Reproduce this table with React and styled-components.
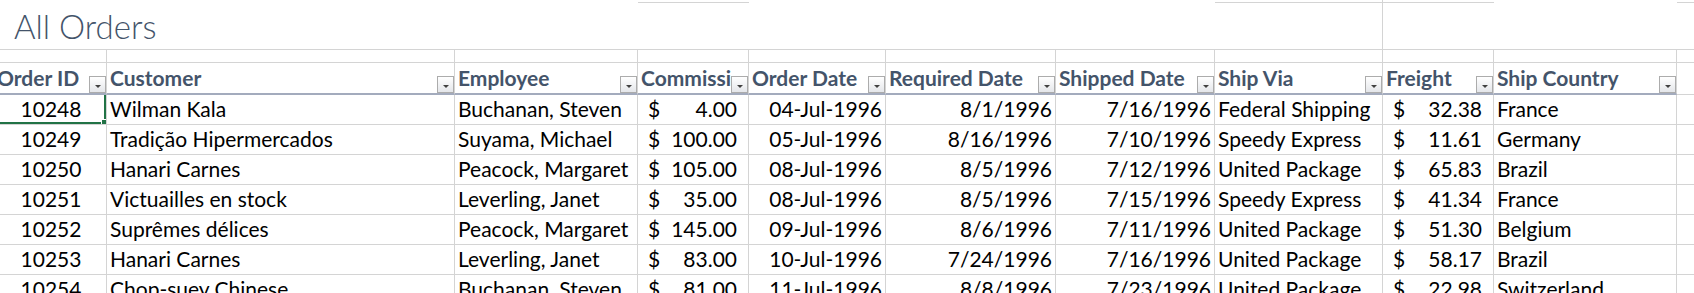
import React from 'react';
import styled, { createGlobalStyle } from 'styled-components';

const GRID = '#d4d4d4';
const HEAD = '#44546a';

const GlobalStyle = createGlobalStyle`
  html, body {
    margin: 0;
    padding: 0;
    background: #fff;
    overflow: hidden;
  }
  body {
    font-family: Lato, "Noto Sans", sans-serif;
    color: #000;
  }
`;

const columns = [
  { key: 'id', title: 'Order ID', width: 112, align: 'center' },
  { key: 'customer', title: 'Customer', width: 348 },
  { key: 'employee', title: 'Employee', width: 183 },
  { key: 'commission', title: 'Commission', width: 111, money: true },
  { key: 'orderDate', title: 'Order Date', width: 137, align: 'right' },
  { key: 'required', title: 'Required Date', width: 170, align: 'right' },
  { key: 'shipped', title: 'Shipped Date', width: 159, align: 'right' },
  { key: 'shipVia', title: 'Ship Via', width: 168 },
  { key: 'freight', title: 'Freight', width: 111, money: true },
  { key: 'country', title: 'Ship Country', width: 183 },
];

const orders = [
  ['10248', 'Wilman Kala', 'Buchanan, Steven', '4.00', '04-Jul-1996', '8/1/1996', '7/16/1996', 'Federal Shipping', '32.38', 'France'],
  ['10249', 'Tradição Hipermercados', 'Suyama, Michael', '100.00', '05-Jul-1996', '8/16/1996', '7/10/1996', 'Speedy Express', '11.61', 'Germany'],
  ['10250', 'Hanari Carnes', 'Peacock, Margaret', '105.00', '08-Jul-1996', '8/5/1996', '7/12/1996', 'United Package', '65.83', 'Brazil'],
  ['10251', 'Victuailles en stock', 'Leverling, Janet', '35.00', '08-Jul-1996', '8/5/1996', '7/15/1996', 'Speedy Express', '41.34', 'France'],
  ['10252', 'Suprêmes délices', 'Peacock, Margaret', '145.00', '09-Jul-1996', '8/6/1996', '7/11/1996', 'United Package', '51.30', 'Belgium'],
  ['10253', 'Hanari Carnes', 'Leverling, Janet', '83.00', '10-Jul-1996', '7/24/1996', '7/16/1996', 'United Package', '58.17', 'Brazil'],
  ['10254', 'Chop-suey Chinese', 'Buchanan, Steven', '81.00', '11-Jul-1996', '8/8/1996', '7/23/1996', 'United Package', '22.98', 'Switzerland'],
];

// cells of the strip above the title that still show their bottom gridline
const topLines = [3, 7, 8];

const Sheet = styled.div`
  display: flex;
  flex-direction: column;
  margin-left: -5px;
  width: 1699px;
`;

const Row = styled.div`
  display: flex;
  height: ${(p) => p.$height}px;
`;

const Cell = styled.div`
  position: relative;
  box-sizing: border-box;
  min-width: 0;
  flex: ${(p) => (p.$width ? `0 0 ${p.$width}px` : '1 1 auto')};
  width: ${(p) => (p.$width ? `${p.$width}px` : 'auto')};
  border-right: ${(p) => (p.$side ? `1px solid ${GRID}` : 'none')};
  border-bottom: ${(p) => p.$bottom || 'none'};
`;

const Title = styled.div`
  padding-left: 19px;
  font-size: 33px;
  font-weight: 300;
  line-height: 47px;
  color: ${HEAD};
  white-space: nowrap;
`;

const HeaderCell = styled(Cell)`
  display: flex;
  align-items: flex-end;
`;

const HeaderLabel = styled.div`
  flex: 1 1 auto;
  min-width: 0;
  align-self: stretch;
  overflow: hidden;
  white-space: nowrap;
  padding-left: ${(p) => p.$pad}px;
  font-size: 21px;
  font-weight: 700;
  line-height: 30px;
  color: ${HEAD};
`;

const FilterButton = styled.div`
  flex: 0 0 auto;
  box-sizing: border-box;
  width: 17px;
  height: 17px;
  border: 1px solid #acacac;
  background: linear-gradient(#ffffff, #e4e6ea);
  display: flex;
  align-items: center;
  justify-content: center;
  padding-top: 3px;

  &::after {
    content: '';
    border-left: 3px solid transparent;
    border-right: 3px solid transparent;
    border-top: 3px solid #404040;
  }
`;

const DataCell = styled(Cell)`
  display: flex;
  justify-content: ${(p) =>
    p.$align === 'right' ? 'flex-end' : p.$align === 'center' ? 'center' : p.$money ? 'space-between' : 'flex-start'};
  padding: ${(p) => (p.$money ? '0 11px 0 10px' : p.$align === 'center' ? '0 0 0 1px' : '0 3px')};
  font-size: 21px;
  line-height: 28px;
  white-space: nowrap;
  overflow: hidden;
`;

const Selection = styled.div`
  position: absolute;
  top: -2px;
  left: -2px;
  right: 0;
  bottom: 0;
  border: 2px solid #217346;
  pointer-events: none;
`;

const Handle = styled.div`
  position: absolute;
  right: -4px;
  bottom: -4px;
  width: 5px;
  height: 5px;
  background: #217346;
  border: 1px solid #fff;
`;

function App() {
  const line = `1px solid ${GRID}`;
  return (
    <>
      <GlobalStyle />
      <Sheet>
        <Row $height={3}>
          {columns.map((c, i) => (
            <Cell key={c.key} $width={c.width} $side={i === 7} $bottom={topLines.includes(i) ? line : null} />
          ))}
          <Cell $bottom={line} />
        </Row>

        <Row $height={47}>
          {columns.map((c, i) => (
            <Cell key={c.key} $width={c.width} $side={i === 7} $bottom={line}>
              {i === 0 && <Title>All Orders</Title>}
            </Cell>
          ))}
          <Cell $bottom={line} />
        </Row>

        <Row $height={13}>
          {columns.map((c) => (
            <Cell key={c.key} $width={c.width} $side $bottom={line} />
          ))}
          <Cell $bottom={line} />
        </Row>

        <Row $height={32}>
          {columns.map((c, i) => (
            <HeaderCell key={c.key} $width={c.width} $side $bottom="2px solid #a3abbd">
              <HeaderLabel $pad={i === 0 ? 2 : 3}>{c.title}</HeaderLabel>
              <FilterButton />
            </HeaderCell>
          ))}
          <Cell $bottom={line} />
        </Row>

        {orders.map((order, r) => (
          <Row key={order[0]} $height={30}>
            {columns.map((c, i) => (
              <DataCell key={c.key} $width={c.width} $side $bottom={line} $align={c.align} $money={c.money}>
                {c.money ? (
                  <>
                    <span>$</span>
                    <span>{order[i]}</span>
                  </>
                ) : (
                  order[i]
                )}
                {r === 0 && i === 0 && (
                  <Selection>
                    <Handle />
                  </Selection>
                )}
              </DataCell>
            ))}
            <Cell $bottom={line} />
          </Row>
        ))}
      </Sheet>
    </>
  );
}

export default App;
